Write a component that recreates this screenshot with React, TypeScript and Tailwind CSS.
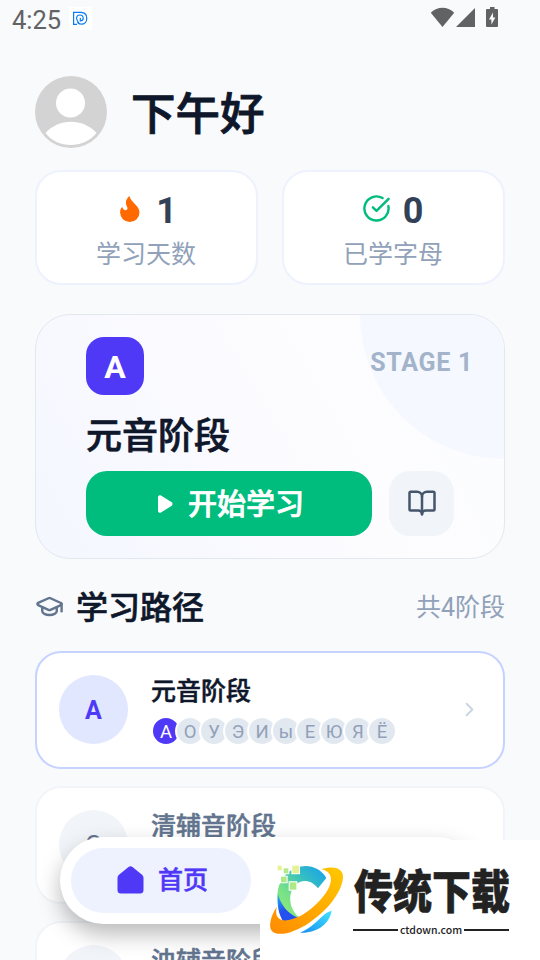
import { BookOpen, ChevronRight, CircleCheckBig, GraduationCap } from "lucide-react";

// Learning path data
const stages = [
  {
    title: "元音阶段",
    symbol: "А",
    active: true,
    letters: ["А", "О", "У", "Э", "И", "ы", "Е", "Ю", "Я", "Ё"],
  },
  { title: "清辅音阶段", symbol: "С", active: false, letters: [] },
  { title: "浊辅音阶段", symbol: "З", active: false, letters: [] },
];

const StatusBar = () => {
  return (
    <div className="flex h-9 items-center justify-between pl-3 pr-[42px] text-[#616264]">
      <div className="flex items-center gap-2">
        <span className="mt-[3px] text-[25.500px] leading-9">4:25</span>
        <span className="flex size-[23px] items-center justify-center bg-white">
          <svg width="17" height="15" viewBox="0 0 17 15" fill="none" stroke="#0b7cf0" strokeWidth="1.200">
            <path d="M5 13.400H1.600V1.400H9c3.800 0 5.800 2.600 5.800 5.900s-2.100 5.900-5.500 5.900c-1.700 0-3-.7-4-1.900" />
            <path d="M7.500 13.200C5.300 10 4.600 8.900 4.600 7.300a3.300 3.300 0 1 1 6.600 0c0 1.600-1.200 2.700-2.900 2.700V6.800" />
          </svg>
        </span>
      </div>
      <svg width="68" height="21" viewBox="0 0 68 21" fill="currentColor" className="-mt-px">
        <path d="M.8 5.8C7.5-.8 17.500-.8 24.200 5.800L12.500 20z" />
        <path d="M45 1v19H26z" />
        <path
          fillRule="evenodd"
          d="M60 0h4.500v2H67q1 0 1 1v16q0 1-1 1H57q-1 0-1-1V3q0-1 1-1h3zM63 5.500 59 12.500h2.400v5l4-7H63z"
        />
      </svg>
    </div>
  );
};

const Header = () => {
  return (
    <header className="flex items-center gap-6 pt-10">
      <svg className="size-[72px]" viewBox="0 0 72 72">
        <circle cx="36" cy="36" r="36" fill="#d3d3d3" />
        <circle cx="35.500" cy="27" r="14.500" fill="#fff" />
        <path d="M10.500 57C24 42 48 42 61.500 57C49 73 22 73 10.500 57z" fill="#fff" />
      </svg>
      <h1 className="mt-[7px] text-[44.500px] leading-[65px] font-medium text-slate-900 [-webkit-text-stroke:0.020em]">
        下午好
      </h1>
    </header>
  );
};

const Stats = () => {
  return (
    <div className="mt-[22px] grid grid-cols-2 gap-6">
      <div className="flex h-[115px] flex-col items-center rounded-[26px] border-2 border-indigo-50 bg-white pt-[19px]">
        <div className="flex h-10 items-center gap-[16px] pl-[4px]">
          <svg width="20" height="26" viewBox="0 0 20 26" fill="#ff6900" className="-mt-1">
            <path d="M9.500 0C10.500 6.500 19.500 9 19.500 16.500A9.700 9.400 0 0 1 .1 16.500C.1 14 .8 12 2.200 11C3 12.500 3.800 14.200 5.500 14.200C7.200 14.200 8 12.500 7.200 11C5.200 7.200 5.300 3.500 9.500 0z" />
          </svg>
          <span className="text-[36px] leading-10 font-bold text-slate-700">1</span>
        </div>
        <p className="mt-[6px] -ml-px text-[25px] leading-9 text-slate-400">学习天数</p>
      </div>
      <div className="flex h-[115px] flex-col items-center rounded-[26px] border-2 border-indigo-50 bg-white pt-[19px]">
        <div className="-ml-[2px] flex h-10 items-center gap-3">
          <CircleCheckBig className="-mt-[5px] size-[29px] text-[#00bc7d]" strokeWidth={2} />
          <span className="text-[36px] leading-10 font-bold text-slate-700">0</span>
        </div>
        <p className="mt-[6px] -ml-px text-[25px] leading-9 text-slate-400">已学字母</p>
      </div>
    </div>
  );
};

const CurrentStage = () => {
  return (
    <section className="relative mt-[29px] h-[245px] overflow-hidden rounded-[35px] border border-slate-200 bg-[linear-gradient(60deg,#f4f7ff_0%,#fafaff_40%,#fdfdff_65%,#fbfcff_100%)] pt-[22px] pl-[50px]">
      <div className="absolute -top-36 -right-36 size-72 rounded-full bg-[#f5f8ff]" />
      <div className="relative flex justify-between pr-[31px]">
        <div className="flex size-[58px] items-center justify-center rounded-[18px] bg-[#4f39f6] text-[32px] leading-none font-bold text-white">
          <span className="mt-[2px]">А</span>
        </div>
        <span className="mt-[8px] text-[25px] leading-9 font-bold tracking-[0.700px] text-[#a3b3c9]">STAGE 1</span>
      </div>
      <h2 className="relative mt-[16px] text-[36px] leading-[52px] font-medium text-slate-900 [-webkit-text-stroke:0.020em]">
        元音阶段
      </h2>
      <div className="relative mt-[8px] flex gap-[17px]">
        <button className="flex h-[65px] w-[286px] items-center justify-center gap-[14px] rounded-[21px] bg-[#00bc7d] pl-[3px] text-[29px] font-medium text-white">
          <svg width="17" height="18" viewBox="0 0 17 18" fill="currentColor">
            <path d="M1 2.200C1 .4 2.600-.3 4 .5L14.700 7.200Q16.300 9 14.700 10.800L4 17.500C2.600 18.300 1 17.600 1 15.800z" />
          </svg>
          <span className="mt-[4px] [-webkit-text-stroke:0.025em]">开始学习</span>
        </button>
        <button className="flex size-[65px] items-center justify-center rounded-[21px] bg-slate-100 pb-[2px]">
          <BookOpen className="size-[30px] text-slate-600" />
        </button>
      </div>
    </section>
  );
};

const StageCard = ({ stage }: { stage: (typeof stages)[number] }) => {
  const { title, symbol, active, letters } = stage;
  return (
    <div
      className={`flex h-[118px] shrink-0 items-center rounded-[26px] border-2 bg-white px-[22px] pb-[2px] ${
        active ? "border-[#c6d2ff]" : "border-slate-100"
      }`}
    >
      <div
        className={`flex size-[69px] items-center justify-center rounded-full text-[25px] ${
          active ? "bg-indigo-100 font-bold text-[#4f39f6]" : "bg-slate-100 text-slate-500"
        }`}
      >
        <span className="mt-[4px]">{symbol}</span>
      </div>
      <div className="ml-[23px] h-[70px] flex-1">
        <h3
          className={`text-[25px] leading-9 font-medium [-webkit-text-stroke:0.020em] ${
            active ? "text-slate-900" : "text-slate-500"
          }`}
        >
          {title}
        </h3>
        <div className="mt-[6px] flex">
          {letters.map((letter, index) => (
            <span
              key={letter}
              className={`-mr-[6px] flex size-[30px] items-center justify-center rounded-full border-2 border-white text-[18.500px] leading-none ${
                index === 0 ? "bg-[#4f39f6] text-white" : "bg-slate-200 text-slate-400"
              }`}
            >
              <span className="mt-[2px]">{letter}</span>
            </span>
          ))}
        </div>
      </div>
      {active && <ChevronRight className="size-[23px] text-slate-300" />}
    </div>
  );
};

const TabBar = () => {
  return (
    <nav className="absolute top-[837px] left-[60px] flex h-[87px] w-[420px] items-center rounded-full bg-white px-[11px] shadow-[0_10px_22px_rgba(0,0,0,0.28)]">
      <div className="flex h-[65px] w-[180px] items-center justify-center gap-[14px] rounded-full bg-indigo-50 pl-[3px] text-[25px] font-medium text-[#4f39f6]">
        <svg width="27" height="28" viewBox="0 0 27 28" fill="currentColor" className="-mt-[2px]">
          <path d="M11.500 1Q13.500-.5 15.500 1L25.300 9Q26.500 10 26.500 12V24Q26.500 27.500 23 27.500H4Q.5 27.500.5 24V12Q.5 10 1.700 9z" />
        </svg>
        <span className="mt-px [-webkit-text-stroke:0.020em]">首页</span>
      </div>
    </nav>
  );
};

const Watermark = () => {
  return (
    <div className="absolute top-[840px] left-[260px] flex h-[120px] w-[280px] bg-white pt-[15px] pl-[2px]">
      <svg width="90" height="90" viewBox="0 0 270 270" className="shrink-0">
        <defs>
          <linearGradient id="ring" x1="0" y1="1" x2="1" y2="0">
            <stop offset="0" stopColor="#9af06d" />
            <stop offset="0.350" stopColor="#74e08a" />
            <stop offset="0.650" stopColor="#35bfc0" />
            <stop offset="1" stopColor="#169eef" />
          </linearGradient>
          <linearGradient id="orbit" x1="0" y1="1" x2="1" y2="0">
            <stop offset="0" stopColor="#ff8a00" />
            <stop offset="1" stopColor="#ffc800" />
          </linearGradient>
          <linearGradient id="blue" x1="0" y1="0" x2="0.500" y2="1">
            <stop offset="0" stopColor="#20b8ee" />
            <stop offset="0.600" stopColor="#2350ef" />
          </linearGradient>
          <linearGradient id="tail" x1="0" y1="1" x2="1" y2="0">
            <stop offset="0" stopColor="#168df0" />
            <stop offset="1" stopColor="#42e4ff" />
          </linearGradient>
        </defs>
        <path d="M193 69C168 27 115 23 79 52C43 80 36 137 61 180C72 193 90 194 111 187C80 161 75 113 103 88C122 71 150 76 168 100Z" fill="url(#ring)" />
        <path d="M48 116C45 147 48 176 65 201L109 188C78 177 56 150 48 116Z" fill="url(#blue)" />
        <path d="M209 167C203 204 168 235 114 233C149 220 171 190 193 174Q201 169 209 167Z" fill="url(#tail)" />
        <path
          d="M178 43C212 31 244 38 243 67C241 110 196 168 142 203C98 232 48 248 29 227C19 214 26 181 45 155C37 181 48 198 76 196C111 192 158 160 189 118C215 82 214 50 178 43Z"
          fill="url(#orbit)"
        />
        <g stroke="#fff" strokeWidth="6" className="[paint-order:stroke]">
          <path d="M47 32h12v14H47z" fill="#e8f28d" />
          <path d="M65 40h14v15H65z" fill="#b6e987" />
          <path d="M91 32h20v23H91z" fill="#e4f294" />
          <path d="M57 65h17v17H57z" fill="#aee987" />
          <path d="M83 82h20v22H83z" fill="#aee987" />
        </g>
      </svg>
      <div className="w-[158px]">
        <p className="mt-[9px] ml-[2px] origin-top scale-y-[1.180] text-[39px] leading-[48px] font-black whitespace-nowrap text-[#222] [-webkit-text-stroke:0.500px_#222]">
          传统下载
        </p>
        <div className="mt-[10px] ml-px flex w-[156px] items-center gap-[2px]">
          <span className="h-[2px] flex-1 bg-[#222]" />
          <span className="font-['Noto_Sans_CJK_SC','Noto_Sans',sans-serif] text-[10.500px] leading-4 font-medium text-[#222]">
            ctdown.com
          </span>
          <span className="h-[2px] flex-1 bg-[#222]" />
        </div>
      </div>
    </div>
  );
};

const App = () => {
  return (
    <div className="relative h-[960px] w-[540px] overflow-hidden bg-[#f9fafc] font-['Roboto','Noto_Sans_CJK_SC',sans-serif]">
      <StatusBar />
      <main className="px-[35px]">
        <Header />
        <Stats />
        <CurrentStage />
        <div className="mt-[24px] flex h-12 items-center">
          <GraduationCap className="-mt-[2px] size-[29px] text-slate-500" />
          <h2 className="mt-[2px] ml-3 text-[32px] leading-[48px] font-medium text-slate-900 [-webkit-text-stroke:0.020em]">
            学习路径
          </h2>
          <span className="mt-[2px] ml-auto text-[25px] text-slate-400">共4阶段</span>
        </div>
        <div className="mt-[20px] flex flex-col gap-[17px]">
          {stages.map((stage) => (
            <StageCard key={stage.title} stage={stage} />
          ))}
        </div>
      </main>
      <TabBar />
      <Watermark />
    </div>
  );
};

export default App;
